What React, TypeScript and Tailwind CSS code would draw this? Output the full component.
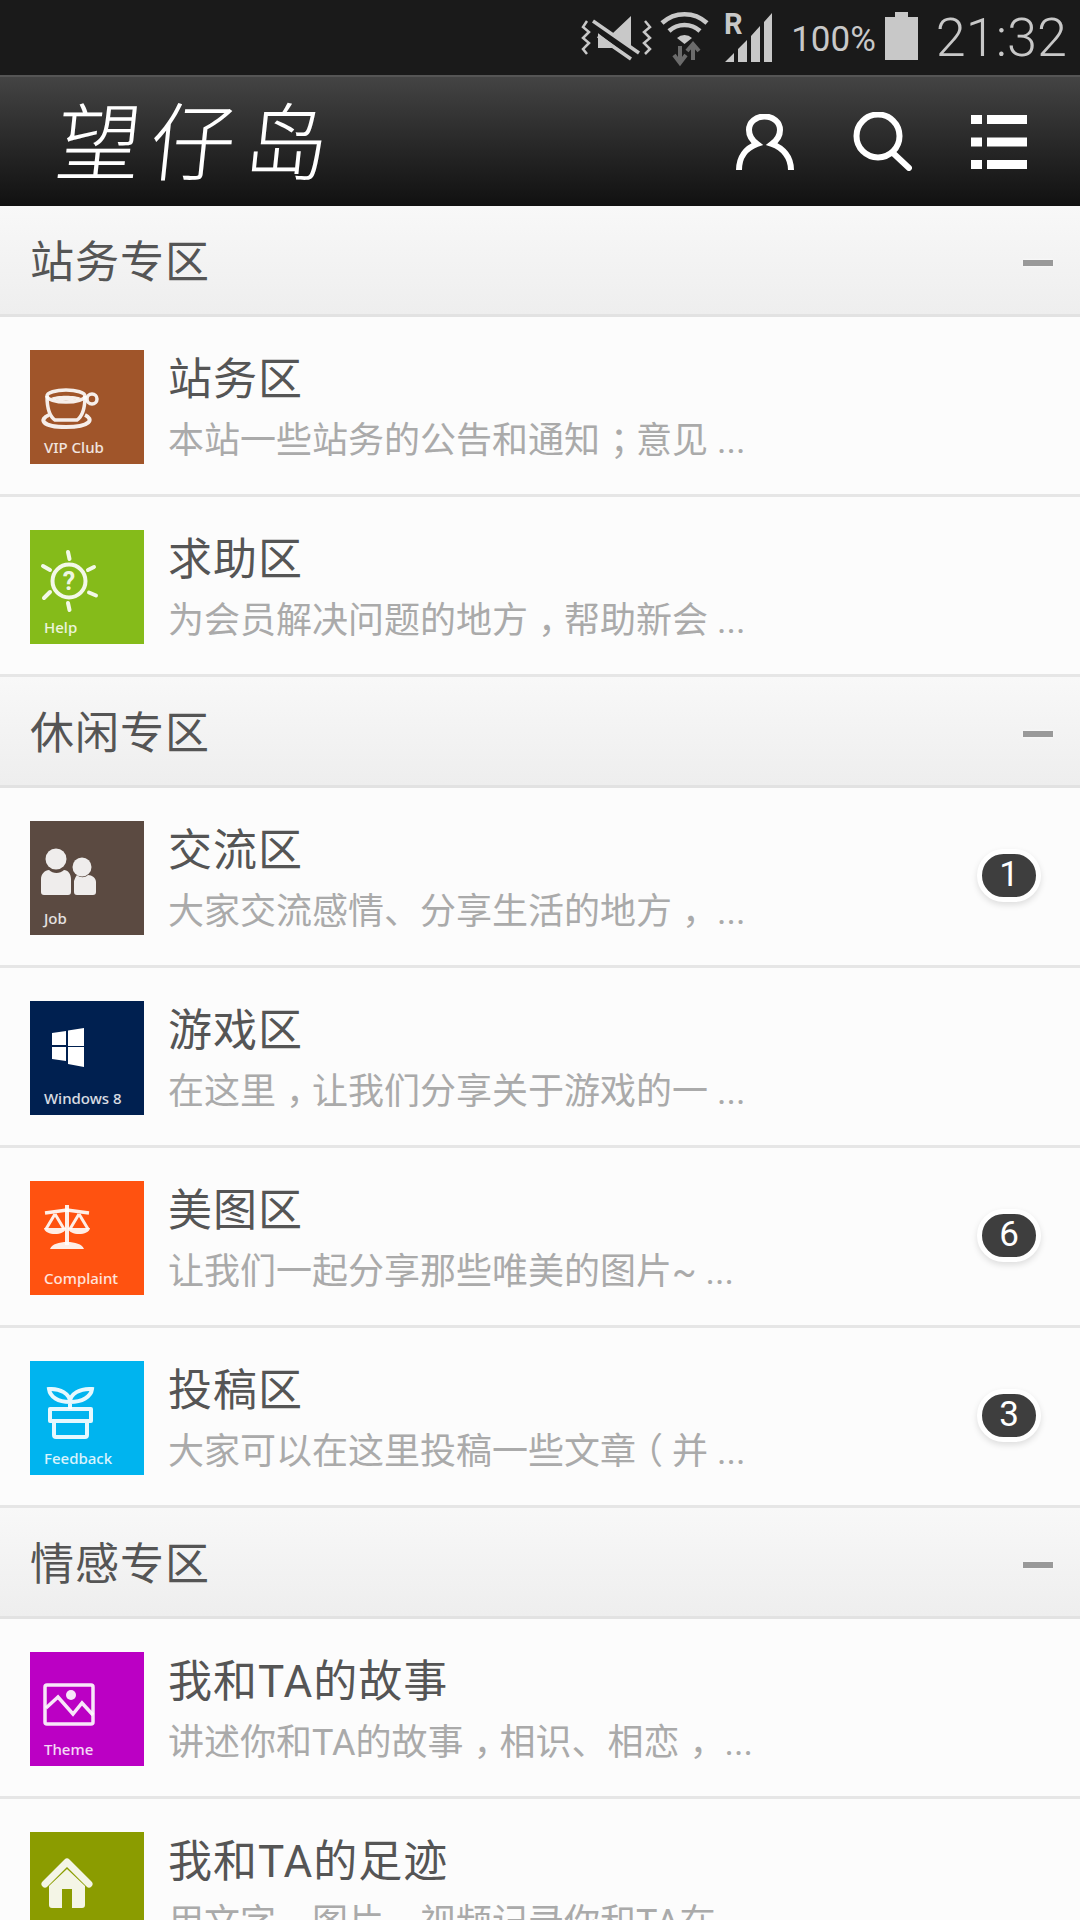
import type { ReactNode } from 'react'

const light = '#c8c8c8'

function VibrateMute() {
  return (
    <svg width="72" height="46" viewBox="580 14 72 46" fill="none">
      <path d="M598 32h15l18-17v43l-18-11h-15z" fill={light} />
      <path d="M594 24l42 32" stroke="#1a1a1a" strokeWidth="8" />
      <path d="M593 20l46 32M598 35l33 23" stroke={light} strokeWidth="3.500" />
      <path d="M587 20l-4 6 6 5-6 6 6 5-6 6 4 5" stroke={light} strokeWidth="2.500" />
      <path d="M645 20l5 6-6 5 6 6-6 5 6 6-5 5" stroke={light} strokeWidth="2.500" />
    </svg>
  )
}

function Wifi() {
  return (
    <svg width="52" height="58" viewBox="658 8 52 58" fill="none">
      <path d="M662 22a33 33 0 0 1 45 0" stroke={light} strokeWidth="4.500" />
      <path d="M669 30a23 23 0 0 1 31 0" stroke={light} strokeWidth="4.500" />
      <path d="M677 37a11 11 0 0 1 15 0l-7.500 6z" fill={light} />
      <path d="M680 45v15M674 54l6 8 6-8" stroke="#6b6b6b" strokeWidth="4" />
      <path d="M693 59v-15M687 50l6-7 6 7" stroke="#6b6b6b" strokeWidth="4" />
    </svg>
  )
}

function Signal() {
  return (
    <svg width="49" height="52" viewBox="724 12 49 52" fill={light}>
      <path d="M725 62l9-9v9zM738 62V49l9-9v22zM751 62V36l9-10v36zM764 62V22l8-9v49z" />
      <text x="724" y="34" fontSize="29" fontWeight="700" fontFamily="Roboto, sans-serif">R</text>
    </svg>
  )
}

function Person() {
  return (
    <svg width="58" height="56" viewBox="0 0 58 56" fill="none" stroke="white" strokeWidth="6">
      <path d="M3 56c0-13 7-22 18-26-4-3-8-8-8-14 0-8 7-13.500 15.500-13.500S44 8 44 16c0 6-4 11-8 14 11 4 19 13 19 26" />
    </svg>
  )
}

function Search() {
  return (
    <svg width="59" height="59" viewBox="0 0 59 59" fill="none" stroke="white" strokeWidth="6">
      <circle cx="25" cy="24" r="21.500" />
      <path d="M40 41l16 15" strokeLinecap="round" />
    </svg>
  )
}

function ListIcon() {
  return (
    <svg width="56" height="54" viewBox="0 0 56 54" fill="white">
      <path d="M0 0h11v9H0zM16 0h40v9H16zM0 22.500h11v9H0zM16 22.500h40v9H16zM0 45h11v9H0zM16 45h40v9H16z" />
    </svg>
  )
}

const tint = 'rgba(255,255,255,0.9)'

function Art({ children }: { children: ReactNode }) {
  return (
    <svg width="114" height="84" viewBox="0 0 114 84" fill="none" stroke={tint} strokeWidth="3.500" className="shrink-0">
      {children}
    </svg>
  )
}

const icons: Record<string, ReactNode> = {
  cup: (
    <Art>
      <ellipse cx="36" cy="46" rx="19" ry="6" />
      <path d="M21 48c5-3 25-3 30 0-5 3-25 3-30 0z" fill={tint} stroke="none" />
      <path d="M17 46c0 12 2 20 8 24h22c6-4 8-12 8-24" />
      <circle cx="62" cy="49" r="5" />
      <path d="M19 65c-10 4-8 12 17 12s28-8 19-12" strokeWidth="4" />
    </Art>
  ),
  help: (
    <Art>
      <circle cx="39" cy="51" r="16.500" strokeWidth="4" />
      <text x="39" y="60" textAnchor="middle" fontSize="25" fontWeight="700" fontFamily="Roboto, sans-serif" fill={tint} stroke="none">?</text>
      <path d="M38 22l1.500 7M58 40l6-3M59 62.500l7 3M38 73l1.500 7M20 62l-6 6M20 40l-7-4" strokeWidth="4" strokeLinecap="round" />
    </Art>
  ),
  people: (
    <Art>
      <g fill={tint} stroke="none">
        <circle cx="26" cy="38" r="10.500" />
        <circle cx="52" cy="46" r="9.500" />
        <path d="M11 58c0-5 4-9 8-9 4 4 11 4 15 0 4 0 7 4 7 9v13c0 2-1 3-3 3H14c-2 0-3-1-3-3z" />
        <path d="M44 60c1-3 2-5 3-6 3 3 8 3 11 0 4 0 8 3 8 7v10c0 2-1 3-3 3H47c-2 0-3-1-3-3z" />
      </g>
    </Art>
  ),
  windows: (
    <Art>
      <path d="M22 32l14-2v14H22zM38 29.500L54 27v18H38zM22 46h14v14l-14-2zM38 46h16v20l-16-3z" fill="white" stroke="none" />
    </Art>
  ),
  scale: (
    <Art>
      <path d="M15 32l22-3 22 3" strokeWidth="3.500" />
      <path d="M37 24v40" strokeWidth="4" />
      <path d="M20 68c2-5 9-7 17-7s15 2 17 7z" fill={tint} stroke="none" />
      <path d="M25 33l-9 15M25 33l9 15" strokeWidth="3" />
      <path d="M14 47h22c-1 8-21 8-22 0z" fill={tint} stroke="none" />
      <path d="M49 33l-9 15M49 33l9 15" strokeWidth="3" />
      <path d="M38 47h22c-1 8-21 8-22 0z" fill={tint} stroke="none" />
    </Art>
  ),
  plant: (
    <Art>
      <path d="M20 48h41v12H20zM24 60h33v14a2 2 0 0 1-2 2H26a2 2 0 0 1-2-2z" strokeWidth="4" strokeLinejoin="round" />
      <path d="M40 48v-7c0-8-10-14-21-13 1 8 9 13 21 13 0-8 10-14 22-13-1 8-10 13-22 13" strokeWidth="4" />
    </Art>
  ),
  picture: (
    <Art>
      <rect x="15" y="33" width="48" height="39" rx="2" />
      <circle cx="41" cy="43" r="5" fill={tint} stroke="none" />
      <path d="M16 56l12-11 15 17 9-11 11 12" />
    </Art>
  ),
  home: (
    <Art>
      <path d="M15 52l22-22 22 22" strokeWidth="7" strokeLinecap="round" strokeLinejoin="round" />
      <path d="M37 37L19 54v19c0 2 1 3 3 3h10V57h10v19h10c2 0 3-1 3-3V54z" fill={tint} stroke="none" />
    </Art>
  ),
}

// the phone's font sets this punctuation mid-cell, halt gives a half-width glyph to pad
function Desc({ text }: { text: string }) {
  return (
    <>
      {text.split(/(，|；|（)/).map((part, i) => {
        if (part === '，' || part === '；') return <span key={i} className="ml-[10px] mr-[8px] [font-feature-settings:'halt']">{part}</span>
        if (part === '（') return <span key={i} className="ml-[9px] mr-[9px] [font-feature-settings:'halt']">{part}</span>
        return part
      })}
    </>
  )
}

type Forum = { title: string; desc: string; bg: string; icon: string; label?: string; badge?: number }

const sections: { name: string; forums: Forum[] }[] = [
  {
    name: '站务专区',
    forums: [
      { title: '站务区', desc: '本站一些站务的公告和通知；意见 ...', bg: 'bg-[#a0552a]', icon: 'cup', label: 'VIP Club' },
      { title: '求助区', desc: '为会员解决问题的地方，帮助新会 ...', bg: 'bg-[#85bb1a]', icon: 'help', label: 'Help' },
    ],
  },
  {
    name: '休闲专区',
    forums: [
      { title: '交流区', desc: '大家交流感情、分享生活的地方， ...', bg: 'bg-[#5b4a41]', icon: 'people', label: 'Job', badge: 1 },
      { title: '游戏区', desc: '在这里，让我们分享关于游戏的一 ...', bg: 'bg-[#002050]', icon: 'windows', label: 'Windows 8' },
      { title: '美图区', desc: '让我们一起分享那些唯美的图片~ ...', bg: 'bg-[#ff5210]', icon: 'scale', label: 'Complaint', badge: 6 },
      { title: '投稿区', desc: '大家可以在这里投稿一些文章（并 ...', bg: 'bg-[#00b4ef]', icon: 'plant', label: 'Feedback', badge: 3 },
    ],
  },
  {
    name: '情感专区',
    forums: [
      { title: '我和TA的故事', desc: '讲述你和TA的故事，相识、相恋， ...', bg: 'bg-[#bb00c4]', icon: 'picture', label: 'Theme' },
      { title: '我和TA的足迹', desc: '用文字、图片、视频记录你和TA在 ...', bg: 'bg-[#8b9c00]', icon: 'home' },
    ],
  },
]

function ForumRow({ forum }: { forum: Forum }) {
  return (
    <div className="flex h-[180px] items-start border-b-[3px] border-[#e6e6e6] bg-[#fcfcfc] pl-[30px] pr-[39px] pt-[33px]">
      <div className={`flex h-[114px] w-[114px] shrink-0 flex-col ${forum.bg}`}>
        {icons[forum.icon]}
        {forum.label && (
          <span className="pl-[14px] font-['Noto_Sans',sans-serif] text-[15px] font-medium leading-[26px] text-white/85">
            {forum.label}
          </span>
        )}
      </div>
      <div className="ml-[24px] min-w-0 flex-1 pt-[6px]">
        <div className="text-[44px] leading-[48px] tracking-[1px] text-[#555555]">{forum.title}</div>
        <div className="mt-[15px] text-[36px] leading-[44px] whitespace-nowrap text-[#aaaaaa]"><Desc text={forum.desc} /></div>
      </div>
      {forum.badge && (
        <div className="mt-[28px] flex h-[53px] w-[64px] shrink-0 items-center justify-center rounded-full border-[5px] border-white bg-[#3e3e3e] text-[35px] text-white shadow-[0_3px_6px_rgba(0,0,0,0.12)]">
          {forum.badge}
        </div>
      )}
    </div>
  )
}

export default function App() {
  return (
    <div className="h-[1920px] w-[1080px] overflow-hidden bg-[#fcfcfc] font-['Roboto','Noto_Sans_CJK_SC',sans-serif]">
      <div className="flex h-[75px] items-center justify-end bg-[#1a1a1a] pr-[13px] text-[#c8c8c8]">
        <VibrateMute />
        <div className="ml-[6px]"><Wifi /></div>
        <div className="ml-[14px]"><Signal /></div>
        <span className="ml-[18px] mt-[3px] text-[35px] leading-none">100%</span>
        <svg width="33" height="48" viewBox="0 0 33 48" fill={light} className="mb-[3px] ml-[9px]">
          <path d="M10 0h13v5h10v43H0V5h10z" />
        </svg>
        <span className="ml-[18px] text-[54px] font-light leading-none">21:32</span>
      </div>

      <div className="flex h-[131px] items-center justify-between border-t-2 border-[#555555] bg-gradient-to-b from-[#444444] to-[#111111] pl-[56px] pr-[53px]">
        <span className="mt-[8px] -skew-x-6 text-[85px] font-light leading-none tracking-[9px] text-white">望仔岛</span>
        <div className="flex items-center gap-[59px]">
          <Person />
          <Search />
          <ListIcon />
        </div>
      </div>

      {sections.map((section) => (
        <div key={section.name}>
          <div className="flex h-[111px] items-center justify-between border-b-[3px] border-[#e2e2e2] bg-gradient-to-b from-[#f8f8f8] to-[#eeeeee] pl-[30px] pr-[27px] pt-[5px]">
            <span className="text-[44px] leading-none tracking-[1px] text-[#555555]">{section.name}</span>
            <span className="h-[6px] w-[30px] bg-[#999999] shadow-[0_0_3px_white]" />
          </div>
          {section.forums.map((forum) => (
            <ForumRow key={forum.title} forum={forum} />
          ))}
        </div>
      ))}
    </div>
  )
}
